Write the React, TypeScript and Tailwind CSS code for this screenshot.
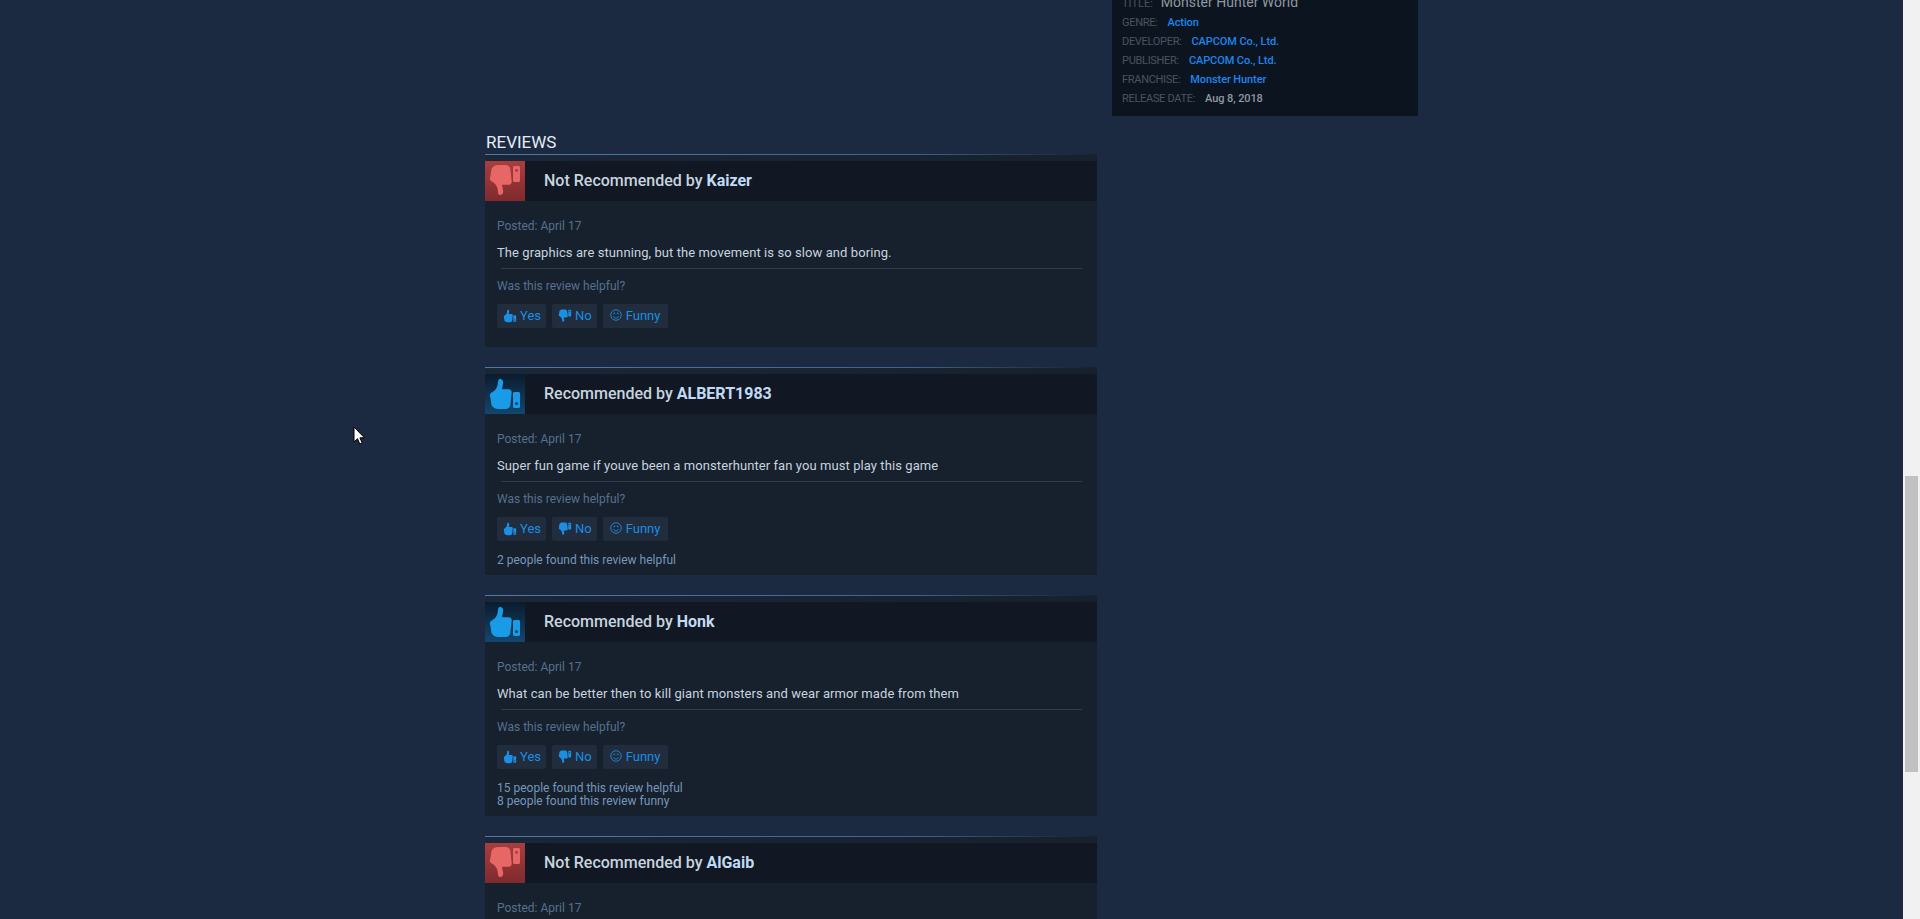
const reviews = [
  {
    good: false,
    user: "Kaizer",
    text: "The graphics are stunning, but the movement is so slow and boring.",
    stats: [],
  },
  {
    good: true,
    user: "ALBERT1983",
    text: "Super fun game if youve been a monsterhunter fan you must play this game",
    stats: ["2 people found this review helpful"],
  },
  {
    good: true,
    user: "Honk",
    text: "What can be better then to kill giant monsters and wear armor made from them",
    stats: ["15 people found this review helpful", "8 people found this review funny"],
  },
  {
    good: false,
    user: "AlGaib",
    text: "",
    stats: [],
  },
];

const details = [
  { label: "GENRE:", value: "Action", link: true },
  { label: "DEVELOPER:", value: "CAPCOM Co., Ltd.", link: true },
  { label: "PUBLISHER:", value: "CAPCOM Co., Ltd.", link: true },
  { label: "FRANCHISE:", value: "Monster Hunter", link: true },
  { label: "RELEASE DATE:", value: "Aug 8, 2018", link: false },
];

// same drawing for up and down, down is just flipped
function Thumb({ down, box, className }: { down?: boolean; box: string; className?: string }) {
  return (
    <svg viewBox={box} className={className} fill="currentColor">
      <g transform={down ? "translate(0 39) scale(1 -1)" : undefined}>
        <path d="M14.500 5.100c2-.5 3.700 1 3.700 3.200 0 2.600-1 4.500-1.200 6.900h6.300c2.300 0 3.700 1.500 3.400 3.700l-1.300 11.500c-.3 2.700-2 4.600-4.600 4.600h-7.500c-3.200 0-5.500-1.300-6.800-3.900L5.300 23.500c-1-2.200-.3-4 1.500-5 2.800-1.600 4.800-3.700 5.700-7 .6-2.400.1-5.700 2-6.400z" />
        <path
          fillRule="evenodd"
          d="M28 19.500c0-.9.6-1.500 1.500-1.500h4c.9 0 1.500.6 1.500 1.500v13c0 .9-.6 1.500-1.500 1.500h-4c-.9 0-1.500-.6-1.500-1.500zM31.500 28.300a1.400 1.400 0 1 0 0 2.800 1.400 1.400 0 0 0 0-2.800z"
        />
      </g>
    </svg>
  );
}

function Smile({ className }: { className?: string }) {
  return (
    <svg viewBox="0 0 16 16" className={className} fill="none" stroke="currentColor" strokeWidth="1">
      <circle cx="8" cy="8" r="6" />
      <path d="M5 9.500c.8 1.300 1.800 1.900 3 1.900s2.200-.6 3-1.900" />
      <circle cx="6" cy="6" r=".5" fill="currentColor" />
      <circle cx="10" cy="6" r=".5" fill="currentColor" />
    </svg>
  );
}

function VoteButton({ children }: { children: React.ReactNode }) {
  return (
    <div className="flex items-center h-6 pl-[6px] pr-[5px] gap-[3px] bg-[#212c3d] rounded-[2px] text-[13px] text-[#1a8fe3]">
      {children}
    </div>
  );
}

function ReviewCard({ review }: { review: (typeof reviews)[number] }) {
  return (
    <div className="relative bg-gradient-to-r from-[#1a2739] to-[#17212d] pt-[7px]">
      <div className="absolute top-0 left-0 right-0 h-px bg-gradient-to-r from-[#4f7ba3] via-[#3f6487] via-70% to-transparent" />
      <div className="flex items-center h-10 bg-[#111824] text-[16px] font-medium text-[#c6d4df]">
        <div
          className={
            review.good
              ? "w-10 h-10 bg-gradient-to-b from-[#0a1c2e] to-[#12476f] text-[#1a9be8]"
              : "w-10 h-10 bg-gradient-to-b from-[#a83e3e] to-[#7f2a2e] text-[#e76666]"
          }
        >
          <Thumb down={!review.good} box="0 0 40 40" className="w-10 h-10" />
        </div>
        <div className="ml-[19px]">
          {review.good ? "Recommended" : "Not Recommended"} by{" "}
          <span className="font-bold text-[#c1dbf4]">{review.user}</span>
        </div>
      </div>
      <div className="bg-[#17202d] px-3 pt-[16px] pb-[8px]">
        <div className="text-[12px] leading-[18px] text-[#56708f]">Posted: April 17</div>
        {review.text && (
          <>
            <div className="mt-[9px] pb-[6px] text-[13px] leading-[18px] tracking-[0.08px] text-[#c6d4df]">
              {review.text}
            </div>
            <div className="h-px ml-[4px] mr-[3px] bg-[#323c4a]" />
            <div className="mt-[8px] text-[12px] leading-[18px] text-[#56708f]">Was this review helpful?</div>
            <div className="flex gap-[6px] mt-[9px]">
              <VoteButton>
                <Thumb box="3 3 34 34" className="w-[14px] h-[14px]" />
                Yes
              </VoteButton>
              <VoteButton>
                <Thumb down box="3 3 34 34" className="w-[14px] h-[14px]" />
                No
              </VoteButton>
              <VoteButton>
                <Smile className="w-[14px] h-[14px] mb-[2px]" />
                <span className="mr-[3px]">Funny</span>
              </VoteButton>
            </div>
            <div className="mt-[11px] text-[12px] leading-[13.5px] text-[#7597ba]">
              {review.stats.length > 0 && (
                <div className="pt-[2px] -mb-px">
                  {review.stats.map((s) => (
                    <div key={s}>{s}</div>
                  ))}
                </div>
              )}
            </div>
          </>
        )}
      </div>
    </div>
  );
}

export default function App() {
  return (
    <div className="flex h-[919px] overflow-hidden bg-[#1b2a41] font-['Roboto','Noto_Sans',sans-serif]">
      <div className="flex-1 min-w-0">
        <div className="flex gap-[15px] w-[933px] mx-auto">
          <main className="w-[612px] shrink-0 pt-[131px]">
            <h2 className="text-[17px] leading-[23px] text-[#e5edf5] pl-[1px]">REVIEWS</h2>
            <div className="flex flex-col gap-[20px]">
              {reviews.map((r) => (
                <ReviewCard key={r.user} review={r} />
              ))}
            </div>
          </main>
          <aside className="w-[306px] h-[116px] shrink-0 bg-[#0c151f] px-[10px] flex flex-col justify-end pb-[7px]">
            <div className="flex items-baseline h-[19px] gap-[8px] -mt-[19px] -translate-y-[3px]">
              <span className="text-[11px] text-[#4b5360]">TITLE:</span>
              <span className="text-[14px] text-[#8f98a0]">Monster Hunter World</span>
            </div>
            {details.map((d) => (
              <div key={d.label} className="flex items-center h-[19px] gap-[10px] text-[11px]">
                <span className="tracking-[-0.3px] text-[#4b5360]">{d.label}</span>
                <span className={d.link ? "font-medium tracking-[-0.1px] text-[#1c85ee]" : "font-medium tracking-[-0.1px] text-[#8f98a0]"}>
                  {d.value}
                </span>
              </div>
            ))}
          </aside>
        </div>
      </div>
      <div className="w-[17px] shrink-0 bg-[#f1f1f1] px-[2px] pt-[476px]">
        <div className="h-[296px] bg-[#c1c1c1]" />
      </div>
      <svg viewBox="0 0 12 19" className="absolute left-[353px] top-[426px] w-[12px] h-[19px]">
        <path d="M1 1v15l3.500-3.300 2.300 5.300 2.400-1-2.300-5.200H11.500z" fill="#fff" stroke="#000" strokeWidth="1" />
      </svg>
    </div>
  );
}
